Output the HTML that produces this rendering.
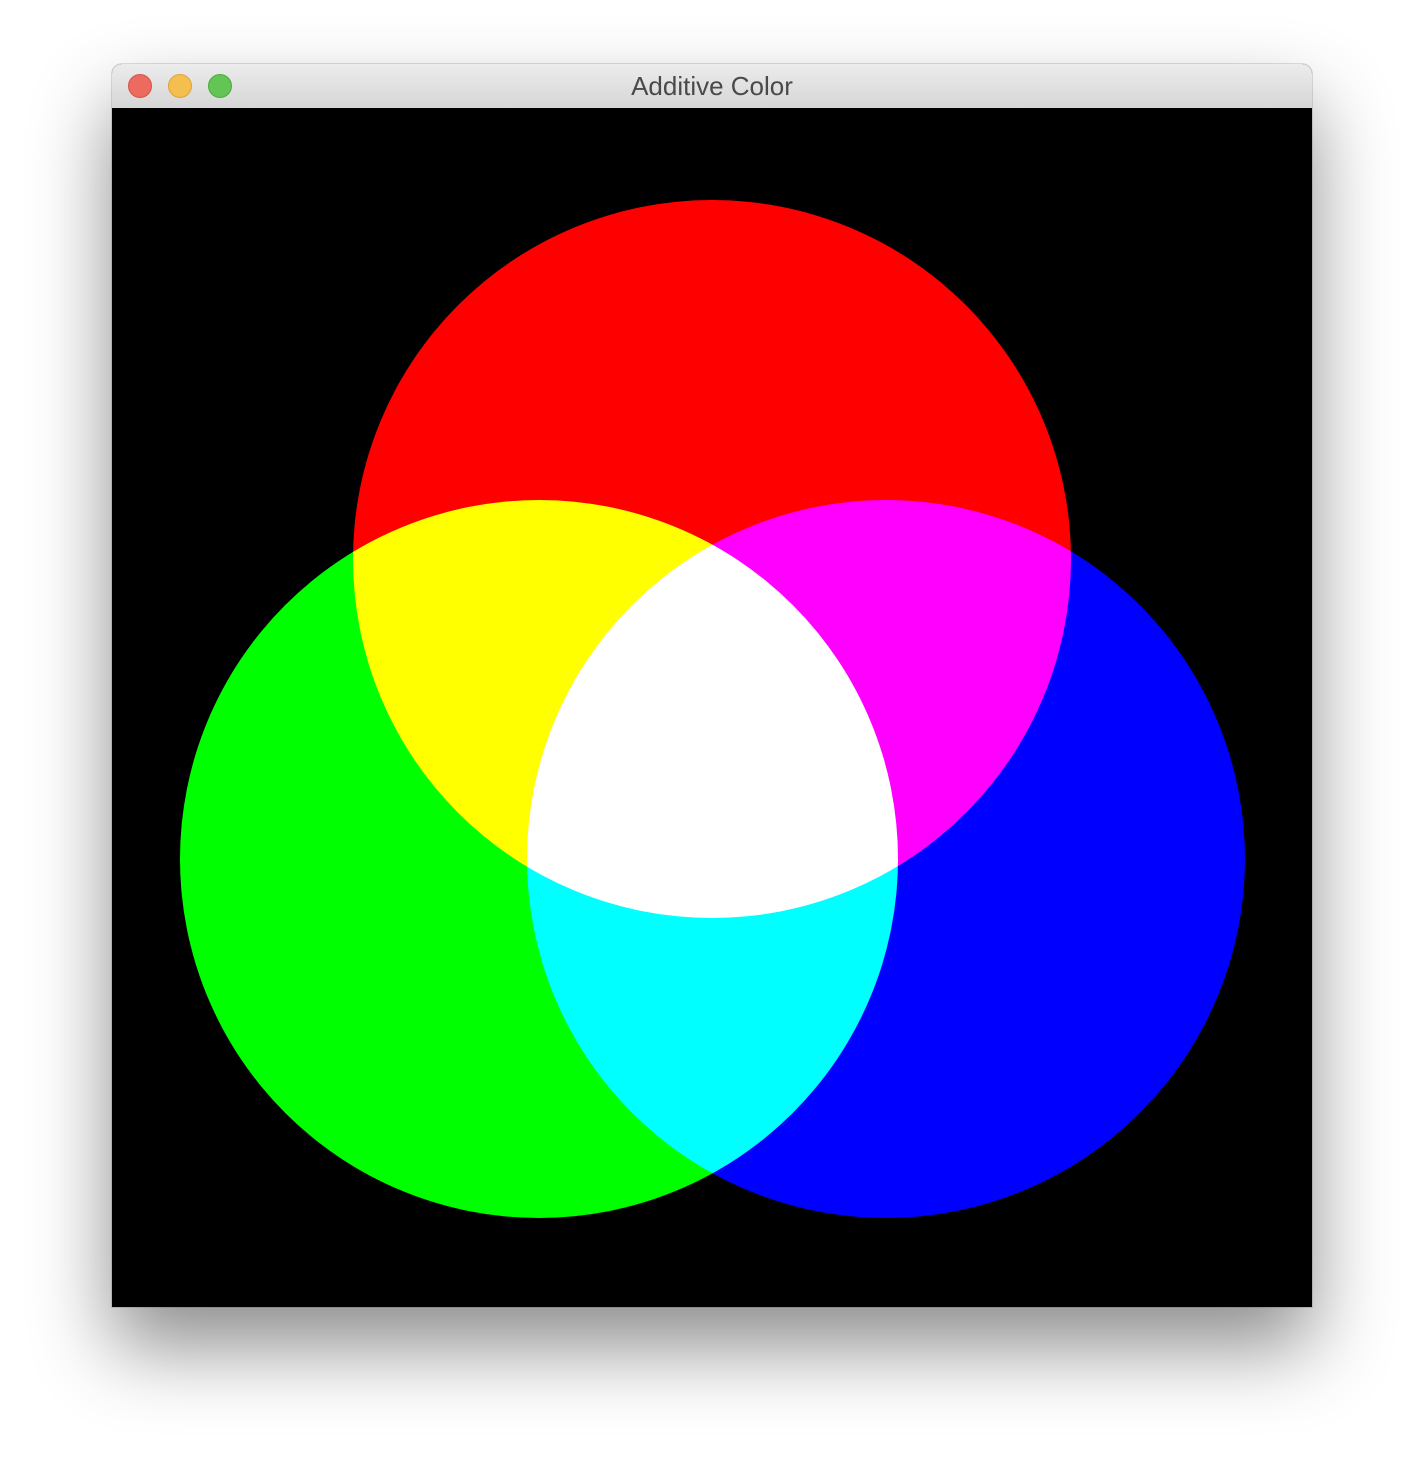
<!DOCTYPE html>
<html><head><meta charset="utf-8"><style>
html,body{margin:0;padding:0;background:#fff;width:1424px;height:1468px;overflow:hidden}
.win{position:absolute;left:112px;top:64px;width:1200px;height:1243px;border-radius:10px 10px 0 0;box-shadow:0 40px 80px rgba(0,0,0,0.45),0 0 0 1px rgba(0,0,0,0.12);background:#000;overflow:hidden}
.tb{position:absolute;left:0;top:0;width:1200px;height:44px;background:linear-gradient(#ececec,#d6d6d6);border-bottom:1px solid #b4b4b4}
.tl{position:absolute;top:10px;width:24px;height:24px;border-radius:50%}
.t{position:absolute;left:0;width:1200px;top:7px;text-align:center;font:26px "Liberation Sans",sans-serif;color:#4a4a4a}
svg{position:absolute;left:0;top:44px}
</style></head><body>
<div class="win">
<div class="tb">
<div class="tl" style="left:16px;background:#ed6a5e;border:1px solid #d2524a;box-sizing:border-box"></div>
<div class="tl" style="left:56px;background:#f5bf4f;border:1px solid #d9a43b;box-sizing:border-box"></div>
<div class="tl" style="left:96px;background:#62c554;border:1px solid #4fa840;box-sizing:border-box"></div>
<div class="t">Additive Color</div>
</div>
<svg width="1200" height="1200" viewBox="0 0 1200 1200">
<rect width="1200" height="1200" fill="#000"/>
<g style="isolation:isolate">
<circle cx="600" cy="451" r="359" fill="#f00" style="mix-blend-mode:screen"/>
<circle cx="427" cy="751" r="359" fill="#0f0" style="mix-blend-mode:screen"/>
<circle cx="774" cy="751" r="359" fill="#00f" style="mix-blend-mode:screen"/>
</g>
</svg>
</div>
</body></html>
